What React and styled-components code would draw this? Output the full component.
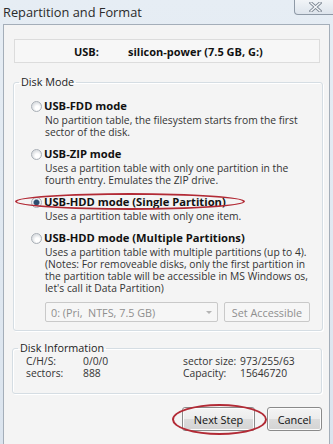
import React from 'react';
import styled, { createGlobalStyle } from 'styled-components';

const GlobalStyle = createGlobalStyle`
  body {
    margin: 0;
    background: #dfe7f0;
    font-family: "Open Sans", "Liberation Sans", sans-serif;
  }
`;

const options = [
  {
    title: 'USB-FDD mode',
    lines: ['No partition table, the filesystem starts from the first', 'sector of the disk.'],
  },
  {
    title: 'USB-ZIP mode',
    lines: ['Uses a partition table with only one partition in the', 'fourth entry. Emulates the ZIP drive.'],
  },
  {
    title: 'USB-HDD mode (Single Partition)',
    lines: ['Uses a partition table with only one item.'],
    checked: true,
  },
  {
    title: 'USB-HDD mode (Multiple Partitions)',
    lines: [
      'Uses a partition table with multiple partitions (up to 4).',
      '(Notes: For removeable disks, only the first partition in',
      'the partition table will be accessible in MS Windows os,',
      "let's call it Data Partition)",
    ],
  },
];

const App = () => {
  return (
    <Window>
      <GlobalStyle />
      <TitleBar>
        <Title>Repartition and Format</Title>
        <CloseButton>
          <svg width="13" height="10" viewBox="0 0 13 10">
            <path d="M2 1 L11 9 M11 1 L2 9" stroke="#7d8793" strokeWidth="3.2" strokeLinecap="square" />
            <path d="M2 1 L11 9 M11 1 L2 9" stroke="#f4f6f8" strokeWidth="1.4" strokeLinecap="square" />
          </svg>
        </CloseButton>
      </TitleBar>
      <Body>
        <UsbBox>
          <UsbLabel>USB:</UsbLabel>
          <span>silicon-power (7.5 GB, G:)</span>
        </UsbBox>

        <Group>
          <Legend>Disk Mode</Legend>
          {options.map((o, i) => (
            <Option key={i}>
              <OptionTitle>
                <Radio checked={o.checked} />
                {o.title}
              </OptionTitle>
              <Desc>
                {o.lines.map((l, j) => (
                  <div key={j}>{l}</div>
                ))}
              </Desc>
            </Option>
          ))}
          <PartRow>
            <Combo>
              <span>0: (Pri,&nbsp; NTFS, 7.5 GB)</span>
              <Arrow />
            </Combo>
            <DisabledButton>Set Accessible</DisabledButton>
          </PartRow>
        </Group>

        <InfoGroup>
          <Legend>Disk Information</Legend>
          <InfoGrid>
            <span>C/H/S:</span>
            <span>0/0/0</span>
            <span>sector size:</span>
            <span>973/255/63</span>
            <span>sectors:</span>
            <span>888</span>
            <span>Capacity:</span>
            <span>15646720</span>
          </InfoGrid>
        </InfoGroup>

        <Buttons>
          <Button width="73px">Next Step</Button>
          <Button width="55px">Cancel</Button>
        </Buttons>
      </Body>

      <Ring style={{ left: 15, top: 193, width: 230, height: 17 }} />
      <Ring style={{ left: 172, top: 404, width: 95, height: 31 }} />
    </Window>
  );
};

const Window = styled.div`
  position: relative;
  width: 333px;
  height: 444px;
  display: flex;
  flex-direction: column;
  background: linear-gradient(#e6edf4, #dbe4ee);
  overflow: hidden;
`;

const TitleBar = styled.div`
  height: 24px;
  display: flex;
  justify-content: space-between;
  align-items: flex-start;
  padding-left: 3px;
`;

const Title = styled.div`
  font-size: 12.8px;
  line-height: 24px;
  color: #2a2a2a;
`;

const CloseButton = styled.div`
  width: 42px;
  height: 15px;
  margin-right: -3px;
  box-sizing: border-box;
  border: 1px solid #8e99a6;
  border-top: none;
  border-radius: 0 0 0 4px;
  background: linear-gradient(#f1f4f7, #dde4ec);
  display: flex;
  align-items: center;
  justify-content: center;
`;

const Body = styled.div`
  flex: 1;
  margin: 0 3px;
  border: 1px solid #a4aeb9;
  border-bottom: none;
  background: #f4f4f4;
  padding: 14px 6px 0 8px;
  display: flex;
  flex-direction: column;
  font-size: 10.3px;
  color: #222;
`;

const UsbBox = styled.div`
  height: 24px;
  margin: 0 3px 0 2px;
  box-sizing: border-box;
  border: 1px solid #dcdcdc;
  background: #f7f7f7;
  display: flex;
  align-items: center;
  font-weight: 700;
  font-size: 11px;
  color: #111;
  padding-left: 59px;
`;

const UsbLabel = styled.span`
  width: 54px;
`;

const Group = styled.fieldset`
  margin: 12px 0 0 1px;
  padding: 0 0 8px 0;
  border: 1px solid #d5dde3;
  border-radius: 3px;
  box-shadow: inset 1px 1px 0 #fff, 1px 1px 0 #fff;
`;

const InfoGroup = styled(Group)`
  margin: 10px 1px 0 0;
  padding-bottom: 14px;
`;

const Legend = styled.legend`
  margin-left: 5px;
  padding: 0 2px;
  font-size: 10.8px;
  line-height: 14px;
  color: #222;
`;

const Option = styled.div`
  margin-top: 9px;
  &:first-of-type {
    margin-top: 10px;
  }
`;

const OptionTitle = styled.div`
  display: flex;
  align-items: center;
  padding-left: 17px;
  font-weight: 700;
  font-size: 11.2px;
  line-height: 14px;
  color: #111;
`;

const Radio = styled.span`
  width: 11px;
  height: 11px;
  flex: none;
  box-sizing: border-box;
  border-radius: 50%;
  border: 1px solid #a9afb6;
  margin-right: 2px;
  background: ${(p) =>
    p.checked
      ? 'radial-gradient(circle, #2d4d6e 0 2.2px, #6f8aa6 2.8px, #eef1f4 3.6px)'
      : 'radial-gradient(circle at 60% 65%, #ffffff 0 2px, #dfe2e5 5px)'};
`;

const Desc = styled.div`
  margin-top: 1px;
  padding-left: 31px;
  line-height: 12px;
  color: #333;
`;

const PartRow = styled.div`
  display: flex;
  gap: 6px;
  margin-top: 8px;
  padding-left: 31px;
`;

const Combo = styled.div`
  width: 173px;
  height: 20px;
  box-sizing: border-box;
  border: 1px solid #c9c9c9;
  border-radius: 2px;
  background: #f6f6f6;
  display: flex;
  align-items: center;
  justify-content: space-between;
  padding: 0 5px;
  font-size: 10.8px;
  color: #8f8f8f;
`;

const Arrow = styled.span`
  width: 0;
  height: 0;
  border-left: 3px solid transparent;
  border-right: 3px solid transparent;
  border-top: 3px solid #b4b4b4;
`;

const DisabledButton = styled.div`
  width: 86px;
  height: 20px;
  box-sizing: border-box;
  border: 1px solid #c9c9c9;
  border-radius: 2px;
  background: #f6f6f6;
  display: flex;
  align-items: center;
  justify-content: center;
  font-size: 10.8px;
  color: #8f8f8f;
`;

const InfoGrid = styled.div`
  display: grid;
  grid-template-columns: 57px 100px 57px auto;
  padding-left: 13px;
  line-height: 12px;
  color: #333;
`;

const Buttons = styled.div`
  display: flex;
  justify-content: flex-end;
  gap: 12px;
  margin-top: 13px;
  padding-right: 1px;
`;

const Button = styled.div`
  width: ${(p) => p.width};
  height: 24px;
  box-sizing: border-box;
  border: 1px solid #8a8a8a;
  border-radius: 3px;
  background: linear-gradient(#f4f4f4 0%, #ececec 50%, #dcdcdc 51%, #d4d4d4 100%);
  box-shadow: inset 0 0 0 1px #fcfcfc;
  display: flex;
  align-items: center;
  justify-content: center;
  font-size: 10.9px;
  color: #111;
`;

const Ring = styled.div`
  position: absolute;
  box-sizing: border-box;
  border: 2.5px solid #b22a35;
  border-radius: 50%;
  pointer-events: none;
`;

export default App;
